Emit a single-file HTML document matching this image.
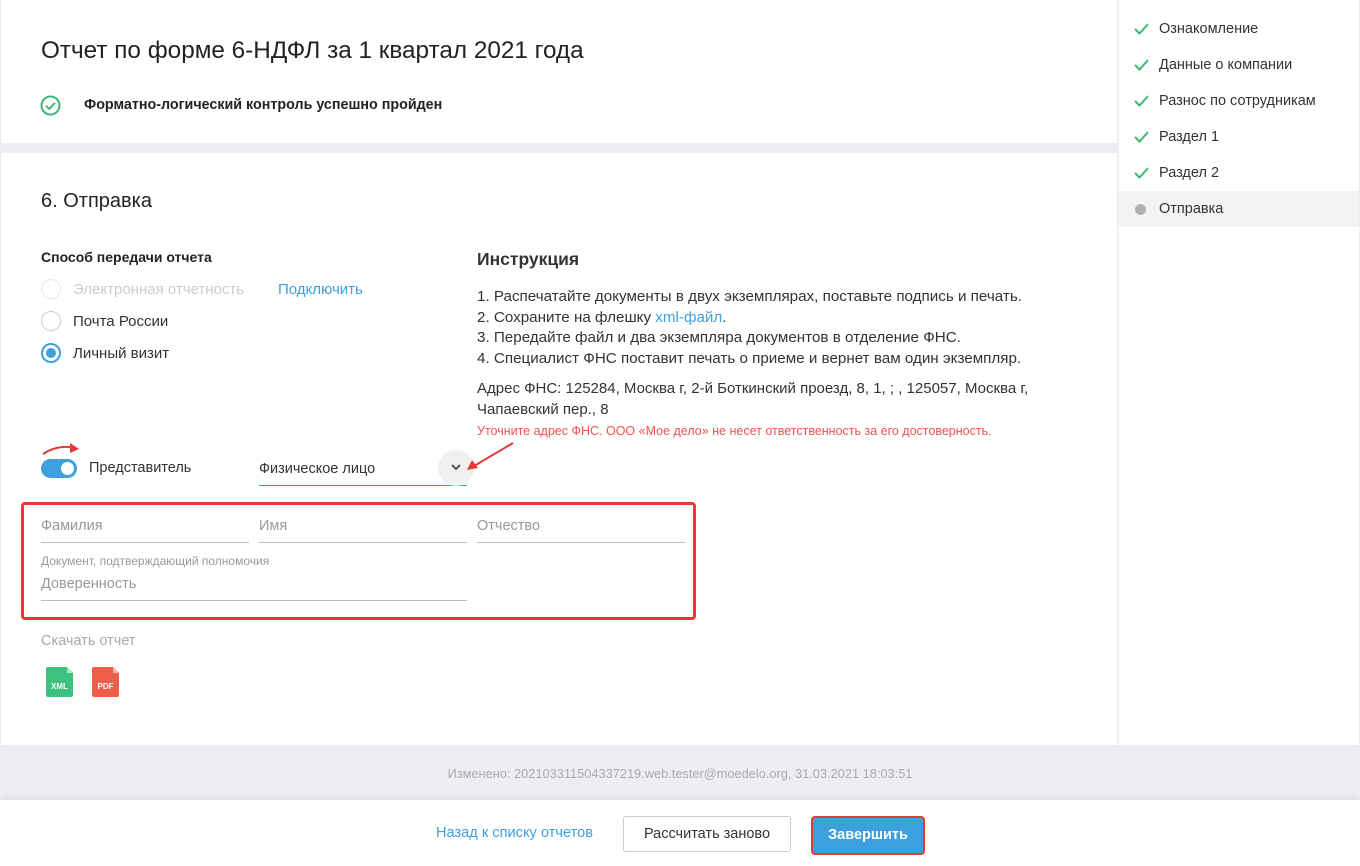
<!DOCTYPE html>
<html><head><meta charset="utf-8"><style>
*{margin:0;padding:0;box-sizing:border-box}
body{width:1360px;height:866px;background:#eceef1;font-family:"Liberation Sans",sans-serif;color:#333;position:relative;overflow:hidden;font-size:14px}
.a{position:absolute;white-space:nowrap}
.card{position:absolute;background:#fff}
.ln{position:absolute;height:1px;background:#bdbdbd}
.ph{color:#999;font-size:14.5px}
.radio{position:absolute;width:20px;height:20px;border-radius:50%;border:1px solid #ccc;background:#fff}
.step{position:absolute;left:1159px;font-size:14.5px;color:#333}
.chk{position:absolute;left:1134px}
</style></head><body>
<div class="card" style="left:1px;top:0;width:1116px;height:143px"></div>
<div class="card" style="left:1px;top:153px;width:1116px;height:592px"></div>
<div class="card" style="left:1119px;top:0;width:240px;height:745px"></div>
<div class="card" style="left:0;top:800px;width:1360px;height:66px;box-shadow:0 -3px 6px rgba(0,0,0,.06)"></div>

<div class="a" style="left:41px;top:37px;font-size:24.3px;color:#222">Отчет по форме 6-НДФЛ за 1 квартал 2021 года</div>
<svg class="a" style="left:40px;top:95px" width="21" height="21" viewBox="0 0 21 21"><circle cx="10.5" cy="10.5" r="9" fill="none" stroke="#3cb878" stroke-width="2"/><path d="M6 10.8l3.2 3 5.8-6" fill="none" stroke="#3cb878" stroke-width="2"/></svg>
<div class="a" style="left:84px;top:97px;font-size:14.3px;font-weight:bold;color:#222">Форматно-логический контроль успешно пройден</div>

<div class="a" style="left:41px;top:190px;font-size:20px;color:#222">6. Отправка</div>
<div class="a" style="left:41px;top:249px;font-size:14px;font-weight:bold;color:#222">Способ передачи отчета</div>
<div class="radio" style="left:41px;top:279px;border-color:#e6e6e6"></div>
<div class="a" style="left:73px;top:281px;font-size:15px;color:#ccc">Электронная отчетность</div>
<div class="a" style="left:278px;top:281px;font-size:15px;color:#3e9fdf">Подключить</div>
<div class="radio" style="left:41px;top:311px"></div>
<div class="a" style="left:73px;top:313px;font-size:15px;color:#333">Почта России</div>
<div class="radio" style="left:41px;top:343px;border:2px solid #3e9fdf"><div style="position:absolute;left:3px;top:3px;width:10px;height:10px;border-radius:50%;background:#3e9fdf"></div></div>
<div class="a" style="left:73px;top:345px;font-size:15px;color:#333">Личный визит</div>

<div class="a" style="left:477px;top:249px;font-size:17.5px;font-weight:bold;color:#333">Инструкция</div>
<div class="a" style="left:477px;top:287px;font-size:15.2px;line-height:20.5px;color:#333">1. Распечатайте документы в двух экземплярах, поставьте подпись и печать.<br>2. Сохраните на флешку <span style="color:#3e9fdf">xml-файл</span>.<br>3. Передайте файл и два экземпляра документов в отделение ФНС.<br>4. Специалист ФНС поставит печать о приеме и вернет вам один экземпляр.</div>
<div class="a" style="left:477px;top:378px;font-size:15px;line-height:21px;color:#333">Адрес ФНС: 125284, Москва г, 2-й Боткинский проезд, 8, 1, ; , 125057, Москва г,<br>Чапаевский пер., 8</div>
<div class="a" style="left:477px;top:424px;font-size:12.5px;color:#ef5350">Уточните адрес ФНС. ООО «Мое дело» не несет ответственность за его достоверность.</div>

<div class="a" style="left:41px;top:459px;width:36px;height:19px;border-radius:10px;background:#3e9fdf"><div style="position:absolute;right:3px;top:3px;width:13px;height:13px;border-radius:50%;background:#fff"></div></div>
<div class="a" style="left:89px;top:460px;font-size:14.5px;color:#333">Представитель</div>
<svg class="a" style="left:40px;top:440px" width="45" height="20"><path d="M3 14 Q18 4 36 8" fill="none" stroke="#e53935" stroke-width="2"/><path d="M30 3 L39 9 L30 13 Z" fill="#e53935"/></svg>
<div class="a" style="left:259px;top:461px;font-size:14.5px;color:#333">Физическое лицо</div>
<div class="ln" style="left:259px;top:485px;width:208px;background:#3e9fdf"></div>
<div class="a" style="left:438px;top:450px;width:36px;height:36px;border-radius:50%;background:#f0f0f0"></div>
<svg class="a" style="left:451px;top:464px" width="10" height="8"><path d="M1 1l4 4 4-4" fill="none" stroke="#555" stroke-width="2"/></svg>
<svg class="a" style="left:464px;top:440px" width="52" height="32"><path d="M49 3 L10 26" stroke="#e53935" stroke-width="2"/><path d="M3 30 L8 20 L14 28 Z" fill="#e53935"/></svg>

<div class="a" style="left:21px;top:502px;width:675px;height:118px;border:3px solid #e53935;border-radius:4px"></div>
<div class="a ph" style="left:41px;top:518px">Фамилия</div>
<div class="ln" style="left:41px;top:542px;width:208px"></div>
<div class="a ph" style="left:259px;top:518px">Имя</div>
<div class="ln" style="left:259px;top:542px;width:208px"></div>
<div class="a ph" style="left:477px;top:518px">Отчество</div>
<div class="ln" style="left:477px;top:542px;width:208px"></div>
<div class="a" style="left:41px;top:554px;font-size:12px;color:#999">Документ, подтверждающий полномочия</div>
<div class="a ph" style="left:41px;top:576px">Доверенность</div>
<div class="ln" style="left:41px;top:600px;width:426px"></div>

<div class="a" style="left:41px;top:633px;font-size:14.5px;color:#aaa">Скачать отчет</div>
<svg class="a" style="left:46px;top:667px" width="27" height="30"><path d="M2 0h19l6 6v22a2 2 0 0 1-2 2H2a2 2 0 0 1-2-2V2a2 2 0 0 1 2-2z" fill="#3ec07f"/><path d="M21 0v6h6z" fill="#a6e6c3"/><text x="13.5" y="22" font-size="8" font-weight="bold" fill="#fff" text-anchor="middle" font-family="Liberation Sans">XML</text></svg>
<svg class="a" style="left:92px;top:667px" width="27" height="30"><path d="M2 0h19l6 6v22a2 2 0 0 1-2 2H2a2 2 0 0 1-2-2V2a2 2 0 0 1 2-2z" fill="#ef5d4b"/><path d="M21 0v6h6z" fill="#f7b1a8"/><text x="13.5" y="22" font-size="8" font-weight="bold" fill="#fff" text-anchor="middle" font-family="Liberation Sans">PDF</text></svg>

<svg class="chk" style="top:22px" width="16" height="14"><path d="M1 7l4.5 4.5L14 2" fill="none" stroke="#3cb878" stroke-width="2"/></svg>
<div class="step" style="top:21px">Ознакомление</div>
<svg class="chk" style="top:58px" width="16" height="14"><path d="M1 7l4.5 4.5L14 2" fill="none" stroke="#3cb878" stroke-width="2"/></svg>
<div class="step" style="top:57px">Данные о компании</div>
<svg class="chk" style="top:94px" width="16" height="14"><path d="M1 7l4.5 4.5L14 2" fill="none" stroke="#3cb878" stroke-width="2"/></svg>
<div class="step" style="top:93px">Разнос по сотрудникам</div>
<svg class="chk" style="top:130px" width="16" height="14"><path d="M1 7l4.5 4.5L14 2" fill="none" stroke="#3cb878" stroke-width="2"/></svg>
<div class="step" style="top:129px">Раздел 1</div>
<svg class="chk" style="top:166px" width="16" height="14"><path d="M1 7l4.5 4.5L14 2" fill="none" stroke="#3cb878" stroke-width="2"/></svg>
<div class="step" style="top:165px">Раздел 2</div>
<div class="a" style="left:1119px;top:191px;width:240px;height:36px;background:#f3f3f3"></div>
<div class="a" style="left:1135px;top:204px;width:11px;height:11px;border-radius:50%;background:#b0b0b0"></div>
<div class="step" style="top:201px">Отправка</div>

<div class="a" style="left:0;top:766px;width:1360px;text-align:center;font-size:12.8px;color:#aaa">Изменено: 202103311504337219.web.tester@moedelo.org, 31.03.2021 18:03:51</div>

<div class="a" style="left:436px;top:825px;font-size:14.6px;color:#3e9fdf">Назад к списку отчетов</div>
<div class="a" style="left:623px;top:816px;width:168px;height:36px;border:1px solid #ccc;border-radius:3px;text-align:center;line-height:34px;font-size:14.5px;color:#333">Рассчитать заново</div>
<div class="a" style="left:811px;top:816px;width:114px;height:39px;border:2px solid #e53935;border-radius:4px;background:#3e9fdf;text-align:center;line-height:35px;font-size:14.5px;font-weight:bold;color:#fff">Завершить</div>
</body></html>
